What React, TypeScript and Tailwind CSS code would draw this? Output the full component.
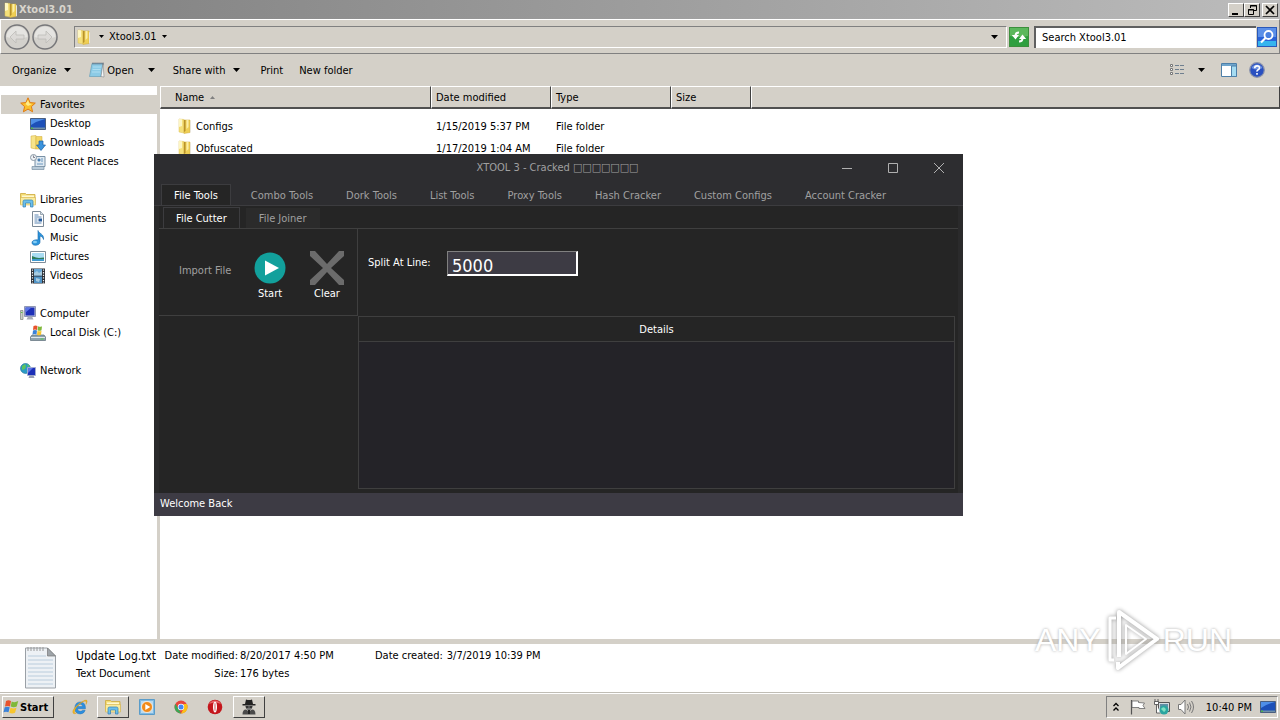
import React from "react";
import clsx from "clsx";

type IconProps = { className?: string };

const FolderIcon = ({ className }: IconProps) => (
  <svg viewBox="0 0 16 16" className={clsx("size-4 shrink-0", className)}>
    <path d="M3 1l5 .5V15l-5-1z" fill="#f5e07a" stroke="#dcc05a" strokeWidth=".5" />
    <path d="M3 1l3 .3V8L3 9z" fill="#fdf6c4" />
    <path d="M8 2h6v12.500L8 15.500z" fill="#efcf55" stroke="#cfa93a" strokeWidth=".5" />
    <path d="M8 2h1.500v11L8 14z" fill="#b8922a" />
    <path d="M10.500 2h2v7l-2 2z" fill="#fbeea6" />
    <path d="M14 3l1 .5V14l-1 .5z" fill="#e8e4da" />
  </svg>
);

const NotepadIcon = () => (
  <svg viewBox="0 0 16 16" className="size-4 shrink-0">
    <path d="M3 1.500h11L12 14.500H.5z" fill="#8ccbe6" stroke="#5b98b5" strokeWidth=".6" />
    <path d="M14 1.500l1 13.500-3-.5z" fill="#f4f6f8" stroke="#777" strokeWidth=".5" />
    <path d="M4 .5v2M6 .5v2M8 .5v2M10 .5v2M12 .5v2M14 .5v2" stroke="#556" strokeWidth=".8" />
    <path d="M4 5h8M3.500 7.500h8M3 10h8" stroke="#b9e2f3" strokeWidth=".8" />
  </svg>
);

const StarIcon = () => (
  <svg viewBox="0 0 16 16" className="size-4 shrink-0">
    <path d="M8 .8l2.100 4.800 5.200.5-3.900 3.500 1.200 5.200L8 12.100l-4.600 2.700 1.200-5.200L.7 6.100l5.200-.5z" fill="#fbc02d" stroke="#e07b12" strokeWidth="1" />
    <path d="M8 3l1.300 3.500L12 7 8 9 5.500 7z" fill="#ffec8a" />
  </svg>
);

const DesktopIcon = () => (
  <svg viewBox="0 0 16 16" className="size-4 shrink-0">
    <path d="M.5 2.500h15v11H.5z" fill="#1d50b8" stroke="#4a5f80" />
    <path d="M1 3h14Q7 5 1 9z" fill="#4f8fe8" />
    <path d="M1 11.500h14V13H1z" fill="#6f8fa8" />
    <path d="M1 11.500h2V13H1z" fill="#4db34d" />
  </svg>
);

const DownloadsIcon = () => (
  <svg viewBox="0 0 16 16" className="size-4 shrink-0">
    <path d="M1 1l5-.5V14l-5-1z" fill="#f7e48a" stroke="#cfa93a" strokeWidth=".5" />
    <path d="M6 1.500h6V14H6z" fill="#f3d766" stroke="#cfa93a" strokeWidth=".5" />
    <path d="M9 6h4v4h2.500L11 15.500 6.500 10H9z" fill="#3a93dd" stroke="#1b5fa5" strokeWidth=".7" />
  </svg>
);

const RecentIcon = () => (
  <svg viewBox="0 0 16 16" className="size-4 shrink-0">
    <path d="M5 2.500h10v10H5z" fill="#dfe9f1" stroke="#7890a5" />
    <path d="M2 12.500h12v3H2z" fill="#b9cbd9" stroke="#7890a5" strokeWidth=".7" />
    <path d="M8 5h2v2H8zM11 5h2M11 7h2M7 10h6" fill="#4f83b5" stroke="#4f83b5" strokeWidth=".8" />
    <circle cx="3.500" cy="3.500" r="3" fill="#eef2f5" stroke="#8a98a5" />
    <path d="M3.500 1.500v2h1.500" fill="none" stroke="#556" strokeWidth=".7" />
  </svg>
);

const LibrariesIcon = () => (
  <svg viewBox="0 0 16 16" className="size-4 shrink-0">
    <path d="M.5 1.500h5l1 1h8.500v9H.5z" fill="#f3dc74" stroke="#cda83c" strokeWidth=".8" />
    <path d="M2 3.500h12v2H2z" fill="#fff8cf" />
    <path d="M.5 5.500h15V13H.5z" fill="#f9eb9d" stroke="#cda83c" strokeWidth=".5" />
    <path d="M3 15V9.500Q3 8 4.500 8h7Q13 8 13 9.500V15h-2.500v-4h-5v4z" fill="#6cbfea" stroke="#3280b5" strokeWidth=".7" />
  </svg>
);

const DocumentIcon = () => (
  <svg viewBox="0 0 16 16" className="size-4 shrink-0">
    <path d="M2.500.5h8l3 3v12h-11z" fill="#fdfdfd" stroke="#7b8997" />
    <path d="M10.500.5v3h3" fill="#d6dfe8" stroke="#7b8997" strokeWidth=".7" />
    <path d="M4.500 4h4M4.500 6h7M4.500 8h3M4.500 10h3M4.500 12h7" stroke="#5d87b5" />
    <path d="M8.500 7.500h3.500v3H8.500z" fill="#245a9c" />
  </svg>
);

const MusicIcon = () => (
  <svg viewBox="0 0 16 16" className="size-4 shrink-0">
    <path d="M8 .5c.5 3 6.500 3.500 5.500 9-.5-2-1.500-3-3.500-3.500v6c0 4-8 4.500-8 .8C2 10 6 9.500 8 10z" fill="#2d95dc" stroke="#1668ab" strokeWidth=".6" />
    <ellipse cx="5" cy="12" rx="2" ry="1.200" fill="#84cdf5" />
  </svg>
);

const PicturesIcon = () => (
  <svg viewBox="0 0 16 16" className="size-4 shrink-0">
    <path d="M.5 2.500h15v11H.5z" fill="#fff" stroke="#7f8d99" />
    <path d="M2 4h12v8H2z" fill="#a9dcf3" />
    <path d="M2 7l4 1.500L9 9l5-.5V10H2z" fill="#2e7d5a" />
    <path d="M2 10h12v2H2z" fill="#3f9ad0" />
  </svg>
);

const VideosIcon = () => (
  <svg viewBox="0 0 16 16" className="size-4 shrink-0">
    <path d="M1 .5h14v15H1z" fill="#2b2f36" />
    <path d="M4 1h8v6.500H4z" fill="#66a7d6" />
    <path d="M4 8.500h8V15H4z" fill="#4f93c6" />
    <path d="M4 5l3-2 2 2 3-2v4.500H4zM6 10l4 1-1 3-3-1z" fill="#a7cbe0" />
    <path d="M2.500 1.500v14M13.500 1.500v14" stroke="#eee" strokeWidth="1.200" strokeDasharray="1.300 1.300" />
  </svg>
);

const ComputerIcon = () => (
  <svg viewBox="0 0 16 16" className="size-4 shrink-0">
    <path d="M.5 4.500h2.500v9H.5z" fill="#c9cfc8" stroke="#7c837b" strokeWidth=".7" />
    <path d="M1 6h1.500v1H1z" fill="#5fbf4a" />
    <path d="M4.500.5h11v10h-11z" fill="#c5cbe0" stroke="#7a83a5" strokeWidth=".8" />
    <path d="M5.500 1.500h9v8h-9z" fill="#1c2fb8" />
    <path d="M5.500 1.500h6l-6 5z" fill="#5a74e6" />
    <path d="M8 10.500h4l1.500 3h-7z" fill="#a6abb8" />
  </svg>
);

const DiskIcon = () => (
  <svg viewBox="0 0 16 16" className="size-4 shrink-0">
    <path d="M2 10h12l1.500 2v3.500H.5V12z" fill="#8fa3ae" stroke="#5d6d78" strokeWidth=".7" />
    <path d="M1 12.500h14" stroke="#dfe7ec" />
    <path d="M10.500 13.500h3v1h-3z" fill="#4fd04f" />
    <path d="M3.500 1q2-1 4 0L7 5Q5 4 3 5z" fill="#e8532c" />
    <path d="M8 1.200q2 1 4 0l-.5 4q-2 1-4 0z" fill="#7fb83a" />
    <path d="M3 5.500q2-1 4 0l-.5 4q-2-1-4 0z" fill="#3b82d8" />
    <path d="M7.500 5.700q2 1 4 0l-.5 4q-2 1-4 0z" fill="#f7c52d" />
  </svg>
);

const NetworkIcon = () => (
  <svg viewBox="0 0 16 16" className="size-4 shrink-0">
    <circle cx="5.500" cy="5.500" r="5" fill="#2a9bc4" stroke="#1a6d96" strokeWidth=".6" />
    <path d="M2 3l3-2 1 2-1 3-3 1zM7 1l3 2-2 1z" fill="#5cc35f" />
    <path d="M7.500 4.500h8v8h-8z" fill="#1c2fb8" stroke="#a2abd0" />
    <path d="M8 5h5l-5 5z" fill="#5a74e6" />
    <path d="M9.500 12.500h4l1 2.500h-6z" fill="#9aa0b5" />
  </svg>
);

const WindowsFlag = () => (
  <svg viewBox="0 0 16 16" className="size-4 shrink-0">
    <path d="M3 2q2.500-1.500 5 0L7 7.500q-2.500-1.200-5 0z" fill="#e8532c" />
    <path d="M8.700 2.500q3 1.500 6.500-.5l-1.500 5.500q-3 1.500-6 0z" fill="#7fb83a" />
    <path d="M1.700 8.300q2.500-1.200 5 0l-1.200 5q-2.500-1.200-5 0z" fill="#3b82d8" />
    <path d="M7.500 8.700q3 1.500 6 0l-1.500 5q-3 1.500-5.700 0z" fill="#f7c52d" />
  </svg>
);

const IeIcon = () => (
  <svg viewBox="0 0 16 16" className="size-4">
    <path d="M13.500 9.700H5.500q.3 2.600 2.700 2.600 1.600 0 2.400-1.100h2.600Q12 15 8.200 15 2.800 14.800 2.800 9q.2-6 5.600-6.100 5.200.1 5.100 6.800zM5.700 7.500h5Q10.400 5.300 8.200 5.300T5.700 7.500z" fill="#2b8fe0" stroke="#1767ad" strokeWidth=".4" />
    <path d="M1.500 14.500Q-1 12 5 6.500T14.500 1q1.500 1-.5 4.500.5-2.800-.3-3.200-2-.8-6.500 3.200T2.500 13.500q.8 1 2.500 0-2.500 2-3.500 1z" fill="#f2b620" stroke="#c98d12" strokeWidth=".3" />
  </svg>
);

const PlayerIcon = () => (
  <svg viewBox="0 0 16 16" className="size-4">
    <path d="M.5.500h15v15H.5z" fill="#7fb9e2" stroke="#5a9cc9" />
    <path d="M2 2h12v12H2z" fill="#b9daf0" />
    <circle cx="8" cy="8" r="5.500" fill="#f08a1a" stroke="#fff" strokeWidth=".7" />
    <path d="M6.300 5l5 3-5 3z" fill="#fff" />
  </svg>
);

const ChromeIcon = () => (
  <svg viewBox="0 0 16 16" className="size-4">
    <circle cx="8" cy="8" r="6.500" fill="#e8453c" />
    <path d="M2.400 4.800L5.600 10 8 14.500A6.500 6.500 0 0 1 2.400 4.800z" fill="#3aa757" />
    <path d="M8 14.500L11 9l-.5-4h3.300A6.500 6.500 0 0 1 8 14.500z" fill="#fbc116" />
    <circle cx="8" cy="8" r="3.200" fill="#fff" />
    <circle cx="8" cy="8" r="2.500" fill="#4486f4" />
  </svg>
);

const OperaIcon = () => (
  <svg viewBox="0 0 16 16" className="size-4">
    <circle cx="8" cy="8" r="7.300" fill="#c4161c" />
    <path d="M2 5a7 7 0 0 1 12 0Q8 2 2 5z" fill="#e8666a" />
    <ellipse cx="8" cy="8" rx="2" ry="5.500" fill="#fff" />
    <ellipse cx="8" cy="8" rx=".7" ry="4.300" fill="#d98083" />
  </svg>
);

const SpyIcon = () => (
  <svg viewBox="0 0 16 16" className="size-4">
    <path d="M5 .5q3 1 6 0l1 4.500H4z" fill="#222" />
    <path d="M1.500 5h13v1.500h-13z" fill="#222" />
    <path d="M4.500 6.500h7l-.5 3-1.500 1.500h-3L5 9.500z" fill="#777" />
    <path d="M4.500 7.200h3v1.500h-2.500zM8.500 7.200h3l-.5 1.500H8.500z" fill="#222" />
    <path d="M1.500 15.500q0-5 3.500-5l3 2 3-2q3.500 0 3.500 5z" fill="#4a4a4a" />
    <path d="M7 11h2v4H7z" fill="#222" />
  </svg>
);

const Arrow = () => (
  <svg viewBox="0 0 7 4" className="h-1 w-[7px] shrink-0">
    <path d="M0 0h7L3.500 4z" fill="#000" />
  </svg>
);

const SmallArrow = () => (
  <svg viewBox="0 0 5 3" className="h-[3px] w-[5px] shrink-0">
    <path d="M0 0h5L2.500 3z" fill="#000" />
  </svg>
);

const NavCircle = ({ flip, label }: { flip?: boolean; label: string }) => (
  <button type="button" aria-label={label} className="size-[26px]">
    <svg viewBox="0 0 26 26" className={clsx("size-[26px]", flip && "-scale-x-100")}>
      <circle cx="13" cy="13" r="12" fill="#d3d1cc" stroke="#77777a" strokeWidth="1.500" />
      <path d="M2.500 13a10.500 10.500 0 0 1 21 0q-10.500 3-21 0z" fill="#e5e4e1" />
      <path d="M12 7l-6 6 6 6v-4h8v-4h-8z" fill="#dcdad7" stroke="#bdbbb8" strokeWidth=".8" />
    </svg>
  </button>
);

const sidebar = [
  {
    name: "Favorites",
    icon: <StarIcon />,
    children: [
      { name: "Desktop", icon: <DesktopIcon /> },
      { name: "Downloads", icon: <DownloadsIcon /> },
      { name: "Recent Places", icon: <RecentIcon /> },
    ],
  },
  {
    name: "Libraries",
    icon: <LibrariesIcon />,
    children: [
      { name: "Documents", icon: <DocumentIcon /> },
      { name: "Music", icon: <MusicIcon /> },
      { name: "Pictures", icon: <PicturesIcon /> },
      { name: "Videos", icon: <VideosIcon /> },
    ],
  },
  {
    name: "Computer",
    icon: <ComputerIcon />,
    children: [{ name: "Local Disk (C:)", icon: <DiskIcon /> }],
  },
  { name: "Network", icon: <NetworkIcon />, children: [] },
];

const files = [
  { name: "Configs", date: "1/15/2019 5:37 PM", type: "File folder" },
  { name: "Obfuscated", date: "1/17/2019 1:04 AM", type: "File folder" },
];

const toolTabs = [
  "File Tools",
  "Combo Tools",
  "Dork Tools",
  "List Tools",
  "Proxy Tools",
  "Hash Cracker",
  "Custom Configs",
  "Account Cracker",
];

const raised =
  "border border-t-white border-l-white border-r-[#404040] border-b-[#404040] bg-[#d4d0c8]";

const TitleBar = () => (
  <header className="flex h-[19px] items-center justify-between bg-linear-to-r from-[#7f7f7f] to-[#bcbcbc] px-[2px]">
    <div className="flex items-center gap-px font-bold text-[#d8d4cc]">
      <FolderIcon />
      <h1>Xtool3.01</h1>
    </div>
    <div className="flex">
      <button type="button" aria-label="Minimize" className={clsx("h-[14px] w-4", raised)}>
        <svg viewBox="0 0 14 12" className="h-3 w-[14px]">
          <path d="M3 9h6v2H3z" />
        </svg>
      </button>
      <button type="button" aria-label="Restore" className={clsx("h-[14px] w-4", raised)}>
        <svg viewBox="0 0 14 12" className="h-3 w-[14px]" fill="none" stroke="#000">
          <path d="M5.500 4V1.500h6v5H9M5 2h7M3.500 5.500h5v5h-5zM3 6h6" />
        </svg>
      </button>
      <button type="button" aria-label="Close" className={clsx("ml-[2px] h-[14px] w-4", raised)}>
        <svg viewBox="0 0 14 12" className="h-3 w-[14px]">
          <path d="M3 2l8 8M11 2l-8 8" stroke="#000" strokeWidth="1.700" />
        </svg>
      </button>
    </div>
  </header>
);

const AddressBar = () => (
  <div className="flex h-[35px] items-center border border-t-white border-r-[#808080] border-b-[#808080] border-l-white pr-[2px] pl-[3px]">
    <div className="flex gap-[2px]">
      <NavCircle label="Back" />
      <NavCircle label="Forward" flip />
    </div>
    <div className="ml-4 flex h-[22px] flex-1 items-center border border-t-[#808080] border-r-white border-b-white border-l-[#808080]">
      <FolderIcon />
      <button type="button" aria-label="Path" className="ml-2 flex items-center gap-[5px]">
        <SmallArrow />
        Xtool3.01
        <SmallArrow />
      </button>
      <button type="button" aria-label="Previous locations" className="mr-2 ml-auto">
        <Arrow />
      </button>
    </div>
    <button type="button" aria-label="Refresh" className="ml-[2px] size-5 border border-[#3c8f3c] bg-[#2f9f3f]">
      <svg viewBox="0 0 18 18" className="size-[18px]">
        <path d="M0 0h18v8Q9 10 0 8z" fill="#5cb85c" />
        <path d="M9 4.500Q5.500 4.500 5.500 8M9 13.500q3.500 0 3.500-3.500" fill="none" stroke="#fff" strokeWidth="2" />
        <path d="M1.800 7h7.200L5.500 11.500zM9 11h7.200L12.500 6.500z" fill="#fff" />
      </svg>
    </button>
    <input
      type="text"
      aria-label="Search"
      defaultValue="Search Xtool3.01"
      className="ml-[5px] h-[22px] w-[222px] border-t-2 border-l-2 border-[#606060] bg-white px-1.5 outline-none"
    />
    <button type="button" aria-label="Go" className="ml-[1px] size-5 border border-[#2a58b8] bg-[#2a62d8]">
      <svg viewBox="0 0 18 18" className="size-[18px]">
        <path d="M0 0h18v9H0z" fill="#5b8fe8" />
        <path d="M0 13h18v5H0z" fill="#35b4ee" />
        <circle cx="10.500" cy="7" r="4" fill="#4a80e0" stroke="#fff" strokeWidth="1.800" />
        <path d="M7.500 10L3 14.500" stroke="#fff" strokeWidth="2.200" />
      </svg>
    </button>
  </div>
);

const Toolbar = () => (
  <div className="flex h-8 items-center pr-[15px] pl-3">
    <button type="button" className="flex items-center gap-2">
      Organize
      <Arrow />
    </button>
    <button type="button" className="ml-[18px] flex items-center gap-[2px]">
      <NotepadIcon />
      Open
    </button>
    <button type="button" aria-label="Open with" className="ml-[14px]">
      <Arrow />
    </button>
    <button type="button" className="ml-[18px] flex items-center gap-2">
      Share with
      <Arrow />
    </button>
    <button type="button" className="ml-5">
      Print
    </button>
    <button type="button" className="ml-4">
      New folder
    </button>
    <div className="ml-auto flex items-center">
      <button type="button" aria-label="Change view">
        <svg viewBox="0 0 16 14" className="h-[14px] w-4">
          <path d="M1.500 1.500h2v2h-2zM1.500 5.500h2v2h-2zM1.500 9.500h2v2h-2z" fill="#fff" stroke="#777" />
          <path d="M6 2.500h4M11 2.500h4M6 6.500h4M11 6.500h4M6 10.500h4M11 10.500h4" stroke="#6f7f8f" />
        </svg>
      </button>
      <button type="button" aria-label="More views" className="ml-[13px]">
        <Arrow />
      </button>
      <button type="button" aria-label="Preview pane" className="ml-4">
        <svg viewBox="0 0 16 14" className="h-[14px] w-4">
          <path d="M.5.500h15v13H.5z" fill="#fff" stroke="#4d7fa8" />
          <path d="M1 1h14v2H1z" fill="#6fa5cc" />
          <path d="M10.500 3h5v10.500h-5z" fill="#a5dcf2" stroke="#4d7fa8" />
        </svg>
      </button>
      <button type="button" aria-label="Help" className="ml-3">
        <svg viewBox="0 0 16 16" className="size-4">
          <circle cx="8" cy="8" r="7.300" fill="#2a50c0" stroke="#8b93ab" strokeWidth="1.200" />
          <path d="M2.500 6a6 6 0 0 1 11 0Q8 9 2.500 6z" fill="#6f92e0" />
          <path d="M5.700 6.200q0-2.300 2.400-2.300t2.300 2q0 1.200-1.300 1.900T8 9.700M8 11v1.700" fill="none" stroke="#fff" strokeWidth="1.600" />
        </svg>
      </button>
    </div>
  </div>
);

const Sidebar = () => (
  <nav className="flex w-40 shrink-0 flex-col gap-[19px] border-r-[3px] border-[#d4d0c8] bg-white pt-[9px]">
    {sidebar.map((group, index) => (
      <ul key={group.name}>
        <li className={clsx("ml-px flex h-[19px] items-center pl-[19px]", index === 0 && "bg-[#d4d0c8]")}>
          <a href="#" className="flex items-center gap-1">
            {group.icon}
            {group.name}
          </a>
        </li>
        {group.children.map((item) => (
          <li key={item.name} className="flex h-[19px] items-center pl-[30px]">
            <a href="#" className="flex items-center gap-1">
              {item.icon}
              {item.name}
            </a>
          </li>
        ))}
      </ul>
    ))}
  </nav>
);

const headCell =
  "h-[23px] border-t border-r border-b-2 border-l border-t-white border-l-white border-r-[#404040] border-b-[#505050] bg-[#d4d0c8] text-left font-normal";

const FileList = () => (
  <section className="flex-1 bg-white">
    <table className="w-full table-fixed border-separate border-spacing-0">
      <colgroup>
        <col className="w-[271px]" />
        <col className="w-[120px]" />
        <col className="w-[120px]" />
        <col className="w-20" />
        <col />
      </colgroup>
      <thead>
        <tr>
          <th className={clsx(headCell, "pl-[14px]")}>
            <span className="flex items-center gap-1.5">
              Name
              <svg viewBox="0 0 5 3" className="h-[3px] w-[5px]">
                <path d="M0 3h5L2.500 0z" fill="#808080" />
              </svg>
            </span>
          </th>
          <th className={clsx(headCell, "pl-1")}>Date modified</th>
          <th className={clsx(headCell, "pl-1")}>Type</th>
          <th className={clsx(headCell, "pl-1")}>Size</th>
          <th className={headCell}></th>
        </tr>
      </thead>
      <tbody>
        <tr className="h-1.5">
          <td colSpan={5}></td>
        </tr>
        {files.map((file) => (
          <tr key={file.name} className="h-[22px]">
            <td className="pl-4">
              <span className="flex items-center gap-1">
                <FolderIcon />
                {file.name}
              </span>
            </td>
            <td className="pl-[5px]">{file.date}</td>
            <td className="pl-[5px]">{file.type}</td>
            <td></td>
            <td></td>
          </tr>
        ))}
      </tbody>
    </table>
  </section>
);

const XtoolWindow = () => (
  <section className="absolute top-[154px] left-[154px] flex h-[362px] w-[809px] flex-col bg-[#252525] text-[#a0a0a0]">
    <div className="flex h-[30px] shrink-0 items-center bg-[#2d2d30] pb-[3px]">
      <h2 className="flex-1 pl-[119px] text-center">XTOOL 3 - Cracked □□□□□□□</h2>
      <div className="flex gap-9 pr-[19px]">
        <button type="button" aria-label="Minimize window">
          <svg viewBox="0 0 10 10" className="size-[10px]" stroke="#b0b0b0">
            <path d="M0 5.500h10" />
          </svg>
        </button>
        <button type="button" aria-label="Maximize window">
          <svg viewBox="0 0 10 10" className="size-[10px]" fill="none" stroke="#b0b0b0">
            <path d="M.5.500h9v9h-9z" />
          </svg>
        </button>
        <button type="button" aria-label="Close window">
          <svg viewBox="0 0 10 10" className="size-[10px]" stroke="#b0b0b0">
            <path d="M0 0l10 10M10 0L0 10" />
          </svg>
        </button>
      </div>
    </div>
    <div className="flex h-[22px] shrink-0 gap-[7px] border-b border-[#3c3c3f] bg-[#2d2d30] pl-[7px]">
      {toolTabs.map((tab, index) => (
        <button
          key={tab}
          type="button"
          className={clsx(
            "border border-b-0 px-3",
            index === 0 ? "border-[#3c3c3f] bg-[#252525] text-white" : "border-transparent"
          )}
        >
          {tab}
        </button>
      ))}
    </div>
    <div className="flex flex-1 flex-col border-x-[5px] border-[#2a2a2b] pt-px pb-1">
      <div className="flex h-[22px] shrink-0 items-stretch gap-1.5 border-b border-[#3f3f3f] pl-1">
        <button type="button" className="border border-b-0 border-[#3c3c3f] px-3 text-white">
          File Cutter
        </button>
        <button type="button" className="mt-px bg-[#2b2b2b] px-[13px]">
          File Joiner
        </button>
      </div>
      <div className="flex flex-1">
        <div className="w-[199px]">
          <div className="flex h-[87px] border-r border-b border-[#3f3f3f] pt-[21px] pl-5">
            <button type="button" className="h-10 w-[54px] text-left">
              Import File
            </button>
            <button type="button" className="ml-[19px] flex w-9 flex-col items-center text-white">
              <svg viewBox="0 0 36 36" className="size-9">
                <circle cx="18" cy="18" r="15.500" fill="#12a09c" />
                <path d="M13 10.500L27 18l-14 7.500z" fill="#fff" />
              </svg>
              <span>Start</span>
            </button>
            <button type="button" className="ml-[21px] flex w-9 flex-col items-center text-white">
              <svg viewBox="0 0 36 36" className="size-9">
                <path d="M1 1h5l12 13L30 1h5v5L22 18l13 12v5h-5L18 22 6 35H1v-5l13-12L1 6z" fill="#6b6b6b" />
              </svg>
              <span>Clear</span>
            </button>
          </div>
        </div>
        <div className="flex flex-1 flex-col pr-[3px]">
          <div className="flex h-[87px] items-start pt-[22px] pl-[10px]">
            <label htmlFor="split" className="w-[79px] pt-1 text-white">
              Split At Line:
            </label>
            <input
              id="split"
              type="text"
              defaultValue="5000"
              className="h-[25px] w-[131px] border border-t-[#808080] border-r-2 border-r-white border-b-2 border-b-white border-l-[#808080] bg-[#3d3b44] px-1 pt-1 text-[18px] text-white outline-none"
            />
          </div>
          <div className="flex flex-1 flex-col border border-[#3f3f3f] bg-[#242328]">
            <h3 className="flex h-[25px] items-center justify-center border-b border-[#3f3f3f] bg-[#252525] text-white">
              Details
            </h3>
          </div>
        </div>
      </div>
    </div>
    <footer className="flex h-[23px] shrink-0 items-center bg-[#3d3b44] px-1.5 pb-[2px] text-white">
      Welcome Back
    </footer>
  </section>
);

const DetailsPane = () => (
  <section className="flex h-[49px] border-b border-[#c0bdb5] bg-white pt-[3px] pl-[25px] leading-[18px] whitespace-nowrap">
    <svg viewBox="0 0 32 42" className="h-[42px] w-8 shrink-0">
      <path d="M.5 1h22l8 8v32H.5z" fill="#edf1f5" stroke="#9aa0a6" />
      <path d="M22.500 1v8h8z" fill="#9fa5aa" stroke="#777" strokeWidth=".7" />
      <path d="M3 9h18M3 13h25M3 17h25M3 21h25M3 25h25M3 29h25M3 33h25M3 37h25" stroke="#b9ccdc" />
      <path d="M3 0v4M6 0v4M9 0v4M12 0v4M15 0v4M18 0v4" stroke="#999" />
    </svg>
    <div className="ml-[19px] w-[88px] shrink-0">
      <p className="text-[12px]">Update Log.txt</p>
      <p>Text Document</p>
    </div>
    <dl className="grid w-[211px] grid-cols-[74px_1fr] content-start gap-x-[2px]">
      <dt className="text-right">Date modified:</dt>
      <dd>8/20/2017 4:50 PM</dd>
      <dt className="text-right">Size:</dt>
      <dd>176 bytes</dd>
    </dl>
    <dl className="flex gap-1">
      <dt>Date created:</dt>
      <dd>3/7/2019 10:39 PM</dd>
    </dl>
  </section>
);

const Taskbar = () => (
  <footer className="flex h-[27px] items-center border-t border-white bg-[#d4d0c8] px-[2px]">
    <button type="button" className={clsx("flex h-[22px] w-[52px] items-center gap-px font-bold", raised)}>
      <WindowsFlag />
      Start
    </button>
    <button type="button" aria-label="Internet Explorer" className="ml-[18px]">
      <IeIcon />
    </button>
    <button type="button" aria-label="Explorer" className={clsx("ml-[9px] flex h-[22px] w-8 items-center justify-center", raised)}>
      <LibrariesIcon />
    </button>
    <div className="ml-[10px] flex gap-[18px]">
      <button type="button" aria-label="Media Player">
        <PlayerIcon />
      </button>
      <button type="button" aria-label="Chrome">
        <ChromeIcon />
      </button>
      <button type="button" aria-label="Opera">
        <OperaIcon />
      </button>
    </div>
    <button type="button" aria-label="Xtool" className={clsx("ml-[10px] flex h-[22px] w-8 items-center justify-center", raised)}>
      <SpyIcon />
    </button>
    <div className="ml-auto flex h-[22px] items-center border border-t-[#808080] border-r-white border-b-white border-l-[#808080] pr-px pl-[5px]">
      <svg viewBox="0 0 8 10" className="h-[10px] w-2" fill="none" stroke="#000" strokeWidth="1.300">
        <path d="M1.500 4L4 1.500 6.500 4M1.500 8.500L4 6l2.500 2.500" />
      </svg>
      <svg viewBox="0 0 16 16" className="ml-[10px] size-4" stroke="#666" strokeWidth=".8">
        <path d="M1.500 1v14.500" stroke="#555" strokeWidth="1.200" />
        <path d="M2 2h6.500v1.500l6 .5-1.500 2.500 2 3H9V8.500H2z" fill="#fff" />
      </svg>
      <svg viewBox="0 0 16 16" className="ml-2 size-4">
        <path d="M4.500 3.500h11v9h-11z" fill="#d5dbe0" stroke="#555" />
        <path d="M6 5h8v6H6z" fill="#5f8fa5" />
        <path d="M1 0v3M4 0v3M.5 2.500h4v3h-4zM2.500 5.500V14h4" fill="#fff" stroke="#555" strokeWidth=".9" />
        <circle cx="10" cy="11" r="4.500" fill="#2aa5a0" />
        <path d="M7 10q2-3 4-1t-1 4z" fill="#7fe0c0" />
      </svg>
      <svg viewBox="0 0 16 16" className="ml-2 size-4" fill="none" stroke="#777">
        <path d="M.5 5.500h2.500l4-4.500v14l-4-4.500H.5z" fill="#fff" />
        <path d="M9.500 5q2 3 0 6M11.500 3.500q3 4.500 0 9M13.500 2q4 6 0 12" />
      </svg>
      <time className="ml-3">10:40 PM</time>
      <button type="button" aria-label="Show desktop" className="ml-2">
        <DesktopIcon />
      </button>
    </div>
  </footer>
);

const Watermark = () => (
  <div className="pointer-events-none absolute right-12 bottom-12 flex items-center gap-px font-['Liberation_Sans',sans-serif] text-[32px] leading-[62px] text-white [text-shadow:0_0_3px_#a8a8a8]">
    <span>ANY</span>
    <svg viewBox="0 0 60 64" className="h-16 w-[60px] drop-shadow-[0_0_2px_#909090]" fill="none" stroke="#fff" strokeLinejoin="round">
      <path d="M14 10H8v42h4" strokeWidth="3" />
      <path d="M17 13v36M17 13V4l38 27-39 29v-6" strokeWidth="4" />
      <path d="M24 17l20 14-20 15z" strokeWidth="2" />
    </svg>
    <span>RUN</span>
  </div>
);

const App = () => {
  return (
    <div className="relative flex min-h-screen w-full flex-col bg-[#d4d0c8] font-['DejaVu_Sans_Condensed','DejaVu_Sans',sans-serif] text-[11px] leading-[15px] text-black">
      <TitleBar />
      <AddressBar />
      <Toolbar />
      <main className="flex flex-1">
        <Sidebar />
        <FileList />
      </main>
      <div className="h-[5px] bg-[#d4d0c8]" />
      <DetailsPane />
      <Taskbar />
      <XtoolWindow />
      <Watermark />
    </div>
  );
};

export default App;
